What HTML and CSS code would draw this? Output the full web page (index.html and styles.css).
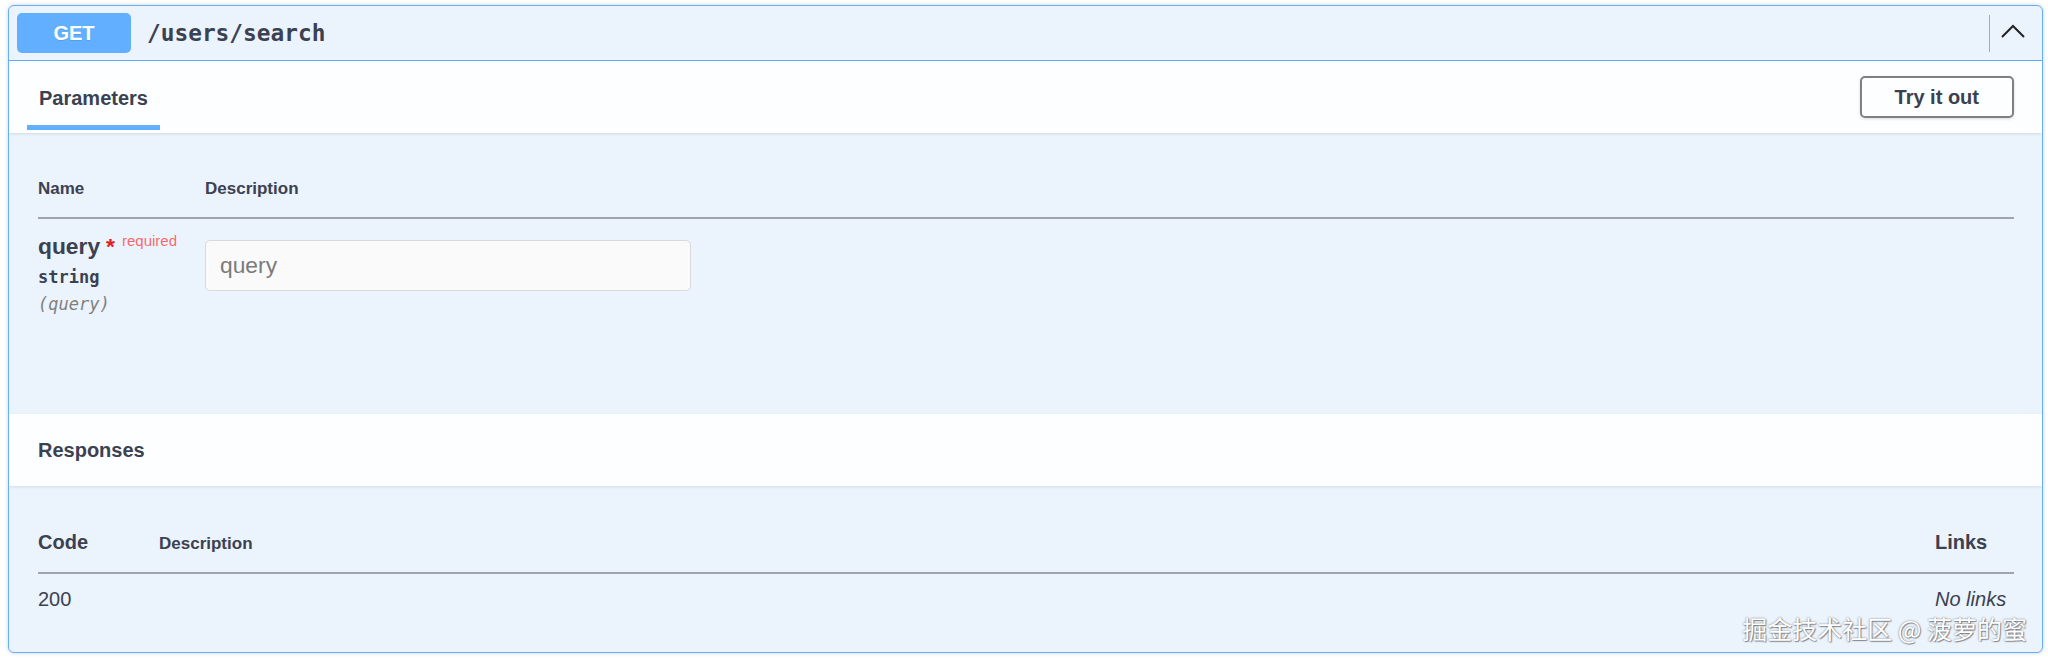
FILE: index.html
```html
<!DOCTYPE html>
<html lang="en">
  <head>
    <meta charset="utf-8" />
    <meta name="viewport" content="width=device-width, initial-scale=1" />
    <title>GET /users/search</title>
    <link rel="stylesheet" href="styles.css">
  </head>
  <body>
    <div class="opblock">
      <!-- summary bar: method badge, path and the collapse toggle -->
      <div class="opblock-summary">
        <span class="method">GET</span>
        <span class="path">/users/search</span>
        <button class="collapse-btn" aria-label="Collapse operation">
          <svg width="24" height="14" viewBox="0 0 24 14">
            <polyline points="1,13 12,2 23,13" fill="none" stroke="#222" stroke-width="2" />
          </svg>
        </button>
      </div>

      <div class="section-header">
        <div class="tab"><h4>Parameters</h4></div>
        <button class="try-out">Try it out</button>
      </div>

      <div class="params">
        <table class="param-table">
          <thead>
            <tr>
              <td class="col-name">Name</td>
              <td>Description</td>
            </tr>
          </thead>
          <tbody>
            <tr>
              <td class="col-name">
                <div class="param-name">query<span class="star">*</span><span class="req">required</span></div>
                <div class="param-type">string</div>
                <div class="param-in">(query)</div>
              </td>
              <td><input type="text" placeholder="query" /></td>
            </tr>
          </tbody>
        </table>
      </div>

      <div class="section-header section-header--plain">
        <h4>Responses</h4>
      </div>

      <div class="responses">
        <table class="resp-table">
          <thead>
            <tr>
              <td class="col-code">Code</td>
              <td class="col-desc">Description</td>
              <td class="col-links">Links</td>
            </tr>
          </thead>
          <tbody>
            <tr>
              <td class="col-code">200</td>
              <td class="col-desc"></td>
              <td class="col-links"><i>No links</i></td>
            </tr>
          </tbody>
        </table>
      </div>
    </div>

    <div class="watermark">掘金技术社区 @ 菠萝的蜜</div>
  </body>
</html>
```

FILE: styles.css
```css
* {
  box-sizing: border-box;
}

body {
  position: relative;
  margin: 0;
  padding: 5px 5px 8px 8px;
  background: #fff;
  font-family: "Liberation Sans", Arial, sans-serif;
  color: #3b4151;
}

h4 {
  margin: 0;
  font-size: 20px;
  font-weight: bold;
  line-height: 23px;
}

.opblock {
  border: 1px solid #61affe;
  border-radius: 6px;
  background: #ebf3fc;
  box-shadow: 0 0 4px rgba(0, 0, 0, 0.19);
  overflow: hidden;
}

/* top bar */
.opblock-summary {
  display: flex;
  align-items: center;
  padding: 7px 0 7px 8px;
  border-bottom: 1px solid #61affe;
}

.method {
  display: flex;
  align-items: center;
  justify-content: center;
  width: 114px;
  height: 40px;
  border-radius: 5px;
  background: #61affe;
  color: #fff;
  font-size: 20px;
  font-weight: bold;
  text-shadow: 0 1px 0 rgba(0, 0, 0, 0.1);
}

.path {
  flex: 1;
  margin-left: 16px;
  font-family: "DejaVu Sans Mono", monospace;
  font-size: 22.8px;
  font-weight: 600;
  color: #3b4151;
}

.collapse-btn {
  display: flex;
  align-items: center;
  height: 37px;
  padding: 0 17px 4px 11px;
  border: 0;
  border-left: 1px solid #a7a9ad;
  background: none;
}

/* white section bars (Parameters / Responses) */
.section-header {
  position: relative;
  z-index: 1;
  display: flex;
  align-items: center;
  justify-content: space-between;
  height: 72px;
  padding: 0 28px 0 18px;
  background: rgba(255, 255, 255, 0.85);
  box-shadow: 0 1px 3px rgba(0, 0, 0, 0.1);
}

.section-header--plain {
  padding-left: 29px;
}

.tab {
  align-self: flex-end;
  margin-bottom: 3px;
  padding: 0 12px 15px;
  border-bottom: 5px solid #61affe;
}

.try-out {
  height: 42px;
  padding: 0 33px;
  border: 2px solid #808080;
  border-radius: 5px;
  background: transparent;
  box-shadow: 0 1px 3px rgba(0, 0, 0, 0.15);
  font-family: "Liberation Sans", Arial, sans-serif;
  font-size: 20px;
  font-weight: bold;
  color: #3b4151;
}

/* parameters */
.params {
  height: 281px;
  padding: 29px 28px 0 29px;
}

table {
  width: 100%;
  border-collapse: collapse;
}

td {
  padding: 0;
  vertical-align: top;
}

.param-table thead td {
  padding: 17px 0 18px;
  font-size: 17px;
  font-weight: bold;
  line-height: 20px;
  border-bottom: 2px solid rgba(59, 65, 81, 0.25);
}

.param-table tbody td {
  padding: 14px 0;
}

.param-table .col-name {
  width: 167px;
}

.param-name {
  font-size: 22.8px;
  font-weight: bold;
  line-height: 26px;
}

.star {
  margin-left: 6px;
  color: #e0201c;
}

.req {
  position: relative;
  top: -8px;
  padding-left: 7px;
  font-size: 15px;
  font-weight: normal;
  color: rgba(255, 0, 0, 0.6);
}

.param-type,
.param-in {
  font-family: "DejaVu Sans Mono", monospace;
  font-size: 17px;
  line-height: 20px;
}

.param-type {
  padding-top: 5px;
  font-weight: 600;
}

.param-in {
  padding-top: 7px;
  font-style: italic;
  color: #808080;
}

input[type='text'] {
  display: block;
  width: 486px;
  height: 51px;
  margin-top: 7px;
  padding: 0 14px;
  border: 1px solid #d9d9d9;
  border-radius: 5px;
  background: #fafafa;
  font-family: "Liberation Sans", Arial, sans-serif;
  font-size: 22.8px;
  color: #3b4151;
}

input::placeholder {
  color: #7b7b7b;
}

/* responses */
.responses {
  height: 166px;
  padding: 28px 28px 28px 29px;
}

.resp-table td {
  vertical-align: baseline;
  line-height: 23px;
}

.resp-table thead td {
  padding: 17px 0;
  font-size: 20px;
  font-weight: bold;
  border-bottom: 2px solid rgba(59, 65, 81, 0.25);
}

.resp-table thead .col-desc {
  font-size: 17px;
}

.resp-table tbody td {
  padding: 14px 0;
  font-size: 20px;
}

.col-code {
  width: 121px;
}

.col-links {
  width: 79px;
}

/* site watermark drawn over the bottom right corner */
.watermark {
  position: absolute;
  top: 613px;
  right: 21px;
  font-family: "Noto Sans CJK SC", sans-serif;
  font-size: 25px;
  line-height: 30px;
  color: #fff;
  text-shadow: 0 0 2px rgba(0, 0, 0, 0.55), 1px 1px 1px rgba(0, 0, 0, 0.35);
}
```
